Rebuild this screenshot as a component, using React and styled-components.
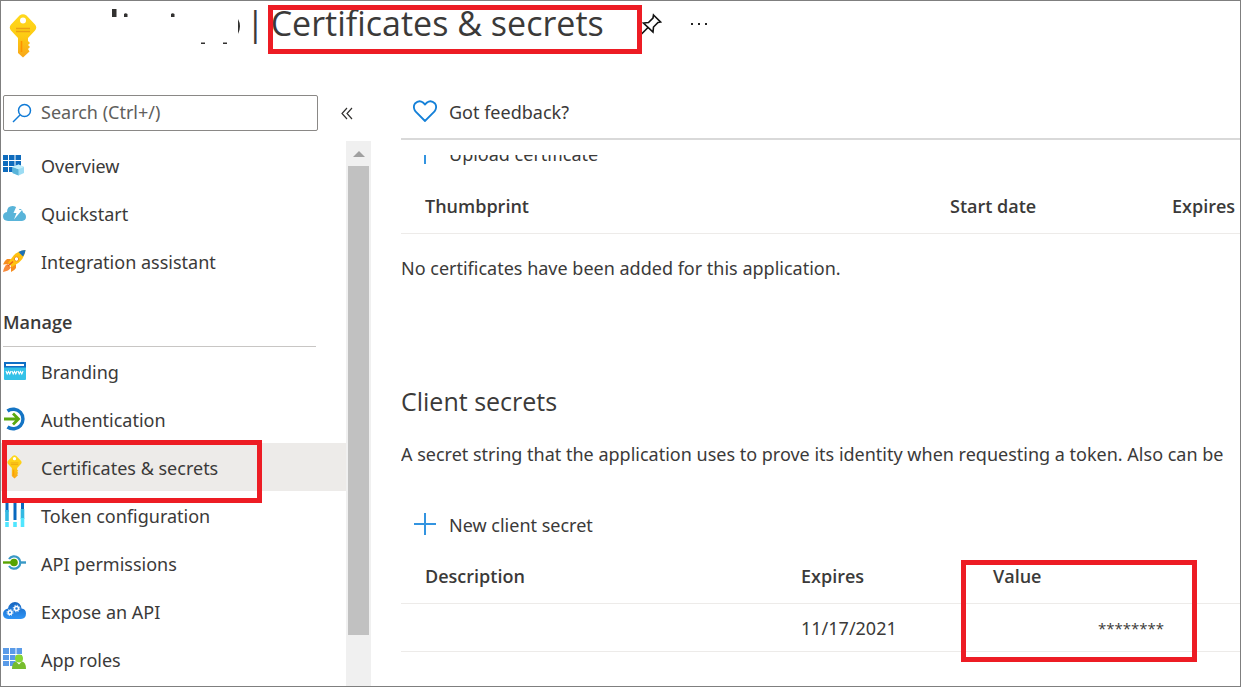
import React from "react";
import styled, { createGlobalStyle } from "styled-components";

const displayFont = `"Open Sans", "Noto Sans", sans-serif`;

const Global = createGlobalStyle`
  *, *::before, *::after { box-sizing: border-box; }
  body {
    margin: 0;
    background: #fff;
    color: #3b3a39;
    font-family: "Noto Sans", "Open Sans", sans-serif;
    font-size: 18px;
    line-height: 24px;
  }
  h1, h2, h3, p, ul { margin: 0; padding: 0; font-weight: 400; }
  ul { list-style: none; }
  button { font: inherit; color: inherit; background: none; border: 0; padding: 0; cursor: pointer; }
`;

const Page = styled.div`
  height: 100vh;
  display: flex;
  flex-direction: column;
  border: 1px solid #7f7f7f;
  overflow: hidden;
`;

const Header = styled.header`
  flex: none;
  display: flex;
  align-items: flex-start;
  height: 84px;
  padding-left: 8px;
`;

const HeaderKey = styled.div`
  display: flex;
  width: 28px;
  padding-top: 13px;
`;

const RedactedName = styled.div`
  display: flex;
  width: 132px;
  margin-left: 72px;
`;

const Title = styled.h1`
  display: flex;
  gap: 6px;
  margin-left: 5px;
  font-family: ${displayFont};
  font-size: 34px;
  line-height: 44px;
  white-space: nowrap;
`;

const Marked = styled.span`
  position: relative;
  display: block;
  padding-right: 36px;
`;

const Highlight = styled.span`
  position: absolute;
  z-index: 2;
  top: ${(p) => p.$top}px;
  left: ${(p) => p.$left}px;
  width: ${(p) => p.$width}px;
  height: ${(p) => p.$height}px;
  border: 5px solid #ed1c24;
  pointer-events: none;
`;

const HeaderButton = styled.button`
  display: flex;
  margin-top: 12px;
  margin-right: 28px;
`;

const Body = styled.div`
  flex: 1;
  min-height: 0;
  display: flex;
`;

const Sidebar = styled.aside`
  flex: none;
  width: 370px;
  display: flex;
  flex-direction: column;
`;

const SearchRow = styled.div`
  flex: none;
  display: flex;
  align-items: center;
  gap: 23px;
  height: 56px;
  padding: 0 0 0 2px;
`;

const SearchBox = styled.label`
  display: flex;
  align-items: center;
  gap: 9px;
  width: 315px;
  height: 36px;
  padding: 0 8px;
  border: 1px solid #8a8886;
  border-radius: 2px;
`;

const SearchInput = styled.input`
  flex: 1;
  min-width: 0;
  border: 0;
  outline: 0;
  padding: 0 0 2px;
  background: none;
  font: inherit;
  color: #323130;
  &::placeholder { color: #605e5c; opacity: 1; }
`;

const NavArea = styled.div`
  flex: 1;
  min-height: 0;
  display: flex;
`;

const Nav = styled.nav`
  flex: 1;
  min-width: 0;
`;

const NavItem = styled.li`
  position: relative;
`;

const NavLink = styled.a`
  display: flex;
  align-items: center;
  gap: 14px;
  height: 48px;
  padding: 2px 0 0;
  color: inherit;
  text-decoration: none;
  background: ${(p) => (p.$active ? "#edebe9" : "transparent")};
  svg { margin-bottom: 2px; }
`;

const NavHeading = styled.h2`
  height: 62px;
  width: 313px;
  margin-left: 2px;
  padding-top: 25px;
  border-bottom: 1px solid #c8c6c4;
  font-family: ${displayFont};
  font-size: 18px;
  font-weight: 600;
`;

const Scrollbar = styled.div`
  flex: none;
  width: 25px;
  padding: 0 2px 51px;
  background: #f0f0f0;
  display: flex;
  flex-direction: column;
`;

const ScrollArrow = styled.div`
  display: flex;
  align-items: center;
  justify-content: center;
  height: 25px;
`;

const ScrollThumb = styled.div`
  flex: 1;
  background: #c1c1c1;
`;

const Main = styled.main`
  flex: 1;
  min-width: 0;
  display: flex;
  flex-direction: column;
  margin-left: 30px;
`;

const Toolbar = styled.div`
  flex: none;
  display: flex;
  align-items: center;
  height: 55px;
  padding-left: 12px;
  border-bottom: 2px solid #d9d9d9;
`;

const CommandButton = styled.button`
  display: flex;
  align-items: center;
  gap: 12px;
  height: 24px;
  svg { margin-bottom: 2px; }
`;

const ScrollView = styled.div`
  flex: 1;
  min-height: 0;
  margin-top: 15px;
  overflow: hidden;
  white-space: nowrap;
`;

const Command = styled.div`
  padding-left: 12px;
`;

const CertSection = styled.section`
  margin-top: -13px;
`;

const Table = styled.table`
  width: 100%;
  table-layout: fixed;
  border-collapse: collapse;
`;

const Th = styled.th`
  position: relative;
  width: ${(p) => (p.$width ? p.$width + "px" : "auto")};
  height: 67px;
  padding: 0 0 15px 24px;
  border-bottom: 1px solid #edebe9;
  text-align: left;
  vertical-align: bottom;
  font-family: ${displayFont};
  font-weight: 600;
`;

const Td = styled.td`
  height: 48px;
  padding: 0 0 0 24px;
  border-bottom: 1px solid #edebe9;
`;

const SecretTd = styled(Td)`
  padding-right: 76px;
  text-align: right;
  font-family: ${displayFont};
  font-size: 15px;
`;

const EmptyNote = styled.p`
  padding-top: 22px;
`;

const SecretSection = styled.section`
  padding-top: 103px;
  h2 { font-family: ${displayFont}; font-size: 25px; line-height: 36px; }
  p { padding: 23px 0 47px; }
`;

function KeyIcon({ width, height }) {
  return (
    <svg width={width} height={height} viewBox="0 0 28 44" aria-hidden="true">
      <defs>
        <linearGradient id="gold" x1="0" x2="0" y1="0" y2="1">
          <stop offset="0" stopColor="#ffd91e" />
          <stop offset="0.5" stopColor="#fdcb12" />
          <stop offset="1" stopColor="#f9a61a" />
        </linearGradient>
      </defs>
      <path d="M10.500 1.500Q14-1 17.500 1.500L26 10.500Q28.500 13.500 26 16.500L19 24V27L21 29L19 31L21 33L19 35L20.500 37.500L14 43.500L9 39V24L2 16.500Q-.5 13.500 2 10.500Z" fill="url(#gold)" />
      <circle cx="14" cy="6.500" r="3" fill="#fff" />
      <path d="M7 14.500H21M7 17.500H21" stroke="#eba013" strokeWidth="1.400" />
      <path d="M12.500 27V38" stroke="#ff9300" strokeWidth="1.600" />
    </svg>
  );
}

const Icon = ({ children }) => (
  <svg width="26" height="26" viewBox="0 0 26 26" fill="none" aria-hidden="true">
    {children}
  </svg>
);

const icons = {
  overview: (
    <Icon>
      <path d="M2 3H7V8H2ZM8 3H13.500V8H8ZM14.500 3H20V8H14.500ZM2 9H7V14H2ZM8 9H13.500V14H8ZM14.500 9H20V14H14.500ZM2 15H7V20H2ZM8 15H13.500V20H8Z" fill="#0f6cbd" />
      <path d="M11.500 15L17.500 12.500L23 15V21L17.500 23.500L11.500 21Z" fill="#9cdcf3" />
      <path d="M11.500 15L17.500 17.300V23.500L11.500 21Z" fill="#59b4d9" />
      <path d="M11.500 15L17.500 12.500L23 15L17.500 17.300Z" fill="#c3eefa" />
    </Icon>
  ),
  quickstart: (
    <Icon>
      <path d="M7 21Q2 20.500 2 16.500Q2 12.500 6 12Q6 6 11.500 6Q15 6 16.500 9Q21 8 22 12.500Q25 13.500 25 17Q25 20.500 21 21Z" fill="#59b4d9" />
      <path d="M16 5H20.500L18 10H21L13 19.500L15.500 13H12.500Z" fill="#fff" />
    </Icon>
  ),
  rocket: (
    <Icon>
      <path d="M10 11L6 11Q3 13 2 16.500L8 16ZM15 16L15 20Q13.500 22.500 10 24L10 18Z" fill="#f78d1e" />
      <path d="M6.500 16Q3 18 2 24Q8 23 10 19.500Z" fill="#f98a3a" />
      <path d="M24.500 2Q17 3 13 7L7 15L11 19L18 14.500Q23.500 10 24.500 2Z" fill="#ffc20e" />
      <path d="M24.500 2Q20.500 2 17.500 4L22 8.500Q24 6 24.500 2Z" fill="#1b70b8" />
      <circle cx="15.500" cy="11" r="2.200" fill="#fff" stroke="#f29111" />
      <path d="M7 18L12 13.500" stroke="#e9601b" strokeWidth="1.600" />
    </Icon>
  ),
  branding: (
    <Icon>
      <path d="M3 4H25V10H3Z" fill="#0f6fc5" />
      <path d="M5 6H23V8H5Z" fill="#fff" />
      <path d="M3 9.500H25V21Q25 22 24 22H4Q3 22 3 21Z" fill="#35c2e8" />
      <path d="M5 13L6.200 16L7.500 13.500L8.800 16L10 13M11 13L12.200 16L13.500 13.500L14.800 16L16 13M17 13L18.200 16L19.500 13.500L20.800 16L22 13" stroke="#fff" strokeWidth="1.100" />
    </Icon>
  ),
  auth: (
    <Icon>
      <path d="M6.500 5A9.800 9.800 0 1 1 6.500 21" stroke="#1474c4" strokeWidth="3.400" />
      <path d="M3 13H17.500M12 7.500L17.500 13L12 18.500" stroke="#59a80f" strokeWidth="2.800" />
    </Icon>
  ),
  token: (
    <Icon>
      <path d="M6 0V10M14 0V18M21.500 0V7" stroke="#0868bf" strokeWidth="3" />
      <path d="M6 8V19M21.500 7V17" stroke="#32b9e2" strokeWidth="3.600" />
      <path d="M6 20V25M14 20V25M21.500 16V25" stroke="#50e6ff" strokeWidth="3.600" />
    </Icon>
  ),
  api: (
    <Icon>
      <path d="M8 9A6.200 6.200 0 1 1 8 16" stroke="#3999c6" strokeWidth="2.200" />
      <path d="M2 12.500H10" stroke="#57a300" strokeWidth="2.400" />
      <path d="M19 12.500H25" stroke="#3999c6" strokeWidth="2.400" />
      <circle cx="13" cy="12.500" r="3.800" fill="#57a300" />
    </Icon>
  ),
  expose: (
    <Icon>
      <defs>
        <linearGradient id="cloud" x1="0" x2="0" y1="0" y2="1">
          <stop offset="0" stopColor="#1565c0" />
          <stop offset="1" stopColor="#2f94f5" />
        </linearGradient>
      </defs>
      <path d="M7 21Q2 20.500 2 16Q2 11.500 7 10.500Q8.500 4 14 4Q19.500 4 20.500 10.500Q25 11 25 15.500Q25 20.500 20 21Z" fill="url(#cloud)" />
      <circle cx="9" cy="14.500" r="1.800" stroke="#fff" strokeWidth="1.500" />
      <circle cx="9" cy="14.500" r="3" stroke="#fff" strokeWidth="1" strokeDasharray="1.200 1.156" />
      <circle cx="15.500" cy="10.500" r="2" stroke="#fff" strokeWidth="1.500" />
      <circle cx="15.500" cy="10.500" r="3.300" stroke="#fff" strokeWidth="1" strokeDasharray="1.300 1.292" />
    </Icon>
  ),
  roles: (
    <Icon>
      <path d="M2 2H8V8H2ZM9 2H14.500V8H9ZM15.500 2H21V8H15.500ZM2 9H8V14H2ZM9 9H14.500V14H9ZM2 15H8V20H2ZM9 15H14.500V20H9Z" fill="#5a9be8" />
      <path d="M15.500 9H21V14H15.500Z" fill="#3974c8" />
      <path d="M11 23Q11 16 15 15.500L18 18.500L21 15.500Q25 16 25 23Z" fill="#76bc2d" />
      <circle cx="18" cy="12.500" r="4" fill="#86d633" />
    </Icon>
  ),
  certs: (
    <Icon>
      <svg x="6" y="1" width="15" height="24">
        <KeyIcon width={15} height={24} />
      </svg>
    </Icon>
  ),
};

const topItems = [
  ["Overview", "overview"],
  ["Quickstart", "quickstart"],
  ["Integration assistant", "rocket"],
];

const manageItems = [
  ["Branding", "branding"],
  ["Authentication", "auth"],
  ["Certificates & secrets", "certs", true],
  ["Token configuration", "token"],
  ["API permissions", "api"],
  ["Expose an API", "expose"],
  ["App roles", "roles"],
];

const NavList = ({ items }) => (
  <ul>
    {items.map(([label, icon, active]) => (
      <NavItem key={label}>
        <NavLink href="#" $active={active} aria-current={active ? "page" : undefined}>
          {icons[icon]}
          {label}
        </NavLink>
        {active && <Highlight $top={-3} $left={1} $width={260} $height={63} />}
      </NavItem>
    ))}
  </ul>
);

const PlusIcon = () => (
  <svg width="24" height="24" viewBox="0 0 24 24" aria-hidden="true">
    <path d="M12 1V23M1 12H23" stroke="#3394e0" strokeWidth="2" />
  </svg>
);

export default function App() {
  return (
    <>
      <Global />
      <Page>
        <Header>
          <HeaderKey>
            <KeyIcon width={28} height={44} />
          </HeaderKey>
          <RedactedName>
            <svg width="132" height="46" viewBox="109 1 132 46" aria-hidden="true">
              <path d="M112 9H116.500V17H112ZM124 14Q125.500 12.500 127.500 14V17H124ZM171 14Q172.500 12.500 174.500 14V17H171ZM201 42.500H205V44H201ZM223 42.500H227V44H223ZM238 19Q242 26 238 34Z" fill="#323130" />
            </svg>
          </RedactedName>
          <Title>
            <span>|</span>
            <Marked>
              Certificates &amp; secrets
              <Highlight $top={4} $left={-3} $width={374} $height={49} />
            </Marked>
          </Title>
          <HeaderButton aria-label="Pin">
            <svg width="22" height="22" viewBox="0 0 22 22" fill="none" stroke="#111" strokeWidth="1.600">
              <path d="M13.500 2L20.500 9L18 9.500L13.500 14L13 19L3.500 10L8.500 9.500L13 5ZM8 14.500L1 21.500" />
            </svg>
          </HeaderButton>
          <HeaderButton aria-label="More">
            <svg width="18" height="22" viewBox="0 0 18 22" fill="#222">
              <path d="M1 10H3V12H1ZM8 10H10V12H8ZM15 10H17V12H15Z" />
            </svg>
          </HeaderButton>
        </Header>
        <Body>
          <Sidebar>
            <SearchRow>
              <SearchBox>
                <svg width="20" height="20" viewBox="0 0 20 20" fill="none" stroke="#0f7ad6" strokeWidth="1.500" aria-hidden="true">
                  <circle cx="12.500" cy="7.500" r="6" />
                  <path d="M8 12L1 19" />
                </svg>
                <SearchInput type="text" aria-label="Search" placeholder="Search (Ctrl+/)" />
              </SearchBox>
              <button aria-label="Collapse menu">
                <svg width="12" height="14" viewBox="0 0 12 14" fill="none" stroke="#323130" strokeWidth="1.200">
                  <path d="M6 2L1 7.500L6 13M11 2L6 7.500L11 13" />
                </svg>
              </button>
            </SearchRow>
            <NavArea>
              <Nav>
                <NavList items={topItems} />
                <NavHeading>Manage</NavHeading>
                <NavList items={manageItems} />
              </Nav>
              <Scrollbar>
                <ScrollArrow>
                  <svg width="12" height="6" viewBox="0 0 12 6" aria-hidden="true">
                    <path d="M0 6L6 0L12 6Z" fill="#a0a0a0" />
                  </svg>
                </ScrollArrow>
                <ScrollThumb />
              </Scrollbar>
            </NavArea>
          </Sidebar>
          <Main>
            <Toolbar>
              <CommandButton>
                <svg width="24" height="22" viewBox="0 0 24 22" fill="none" stroke="#1480d8" strokeWidth="1.800" aria-hidden="true">
                  <path d="M12 21L2.500 11.500Q-.5 7 2 3.500Q6-.5 10 2.500L12 4.500L14 2.500Q18-.5 22 3.500Q24.500 7 21.500 11.500Z" />
                </svg>
                Got feedback?
              </CommandButton>
            </Toolbar>
            <ScrollView>
              <CertSection>
                <Command>
                  <CommandButton>
                    <PlusIcon />
                    Upload certificate
                  </CommandButton>
                </Command>
                <Table>
                  <thead>
                    <tr>
                      <Th>Thumbprint</Th>
                      <Th $width={222}>Start date</Th>
                      <Th $width={92}>Expires</Th>
                    </tr>
                  </thead>
                </Table>
                <EmptyNote>No certificates have been added for this application.</EmptyNote>
              </CertSection>
              <SecretSection>
                <h2>Client secrets</h2>
                <p>A secret string that the application uses to prove its identity when requesting a token. Also can be</p>
                <Command>
                  <CommandButton>
                    <PlusIcon />
                    New client secret
                  </CommandButton>
                </Command>
                <Table>
                  <thead>
                    <tr>
                      <Th>Description</Th>
                      <Th $width={192}>Expires</Th>
                      <Th $width={271}>
                        Value
                        <Highlight $top={23} $left={-8} $width={236} $height={102} />
                      </Th>
                    </tr>
                  </thead>
                  <tbody>
                    <tr>
                      <Td />
                      <Td>11/17/2021</Td>
                      <SecretTd>********</SecretTd>
                    </tr>
                  </tbody>
                </Table>
              </SecretSection>
            </ScrollView>
          </Main>
        </Body>
      </Page>
    </>
  );
}
